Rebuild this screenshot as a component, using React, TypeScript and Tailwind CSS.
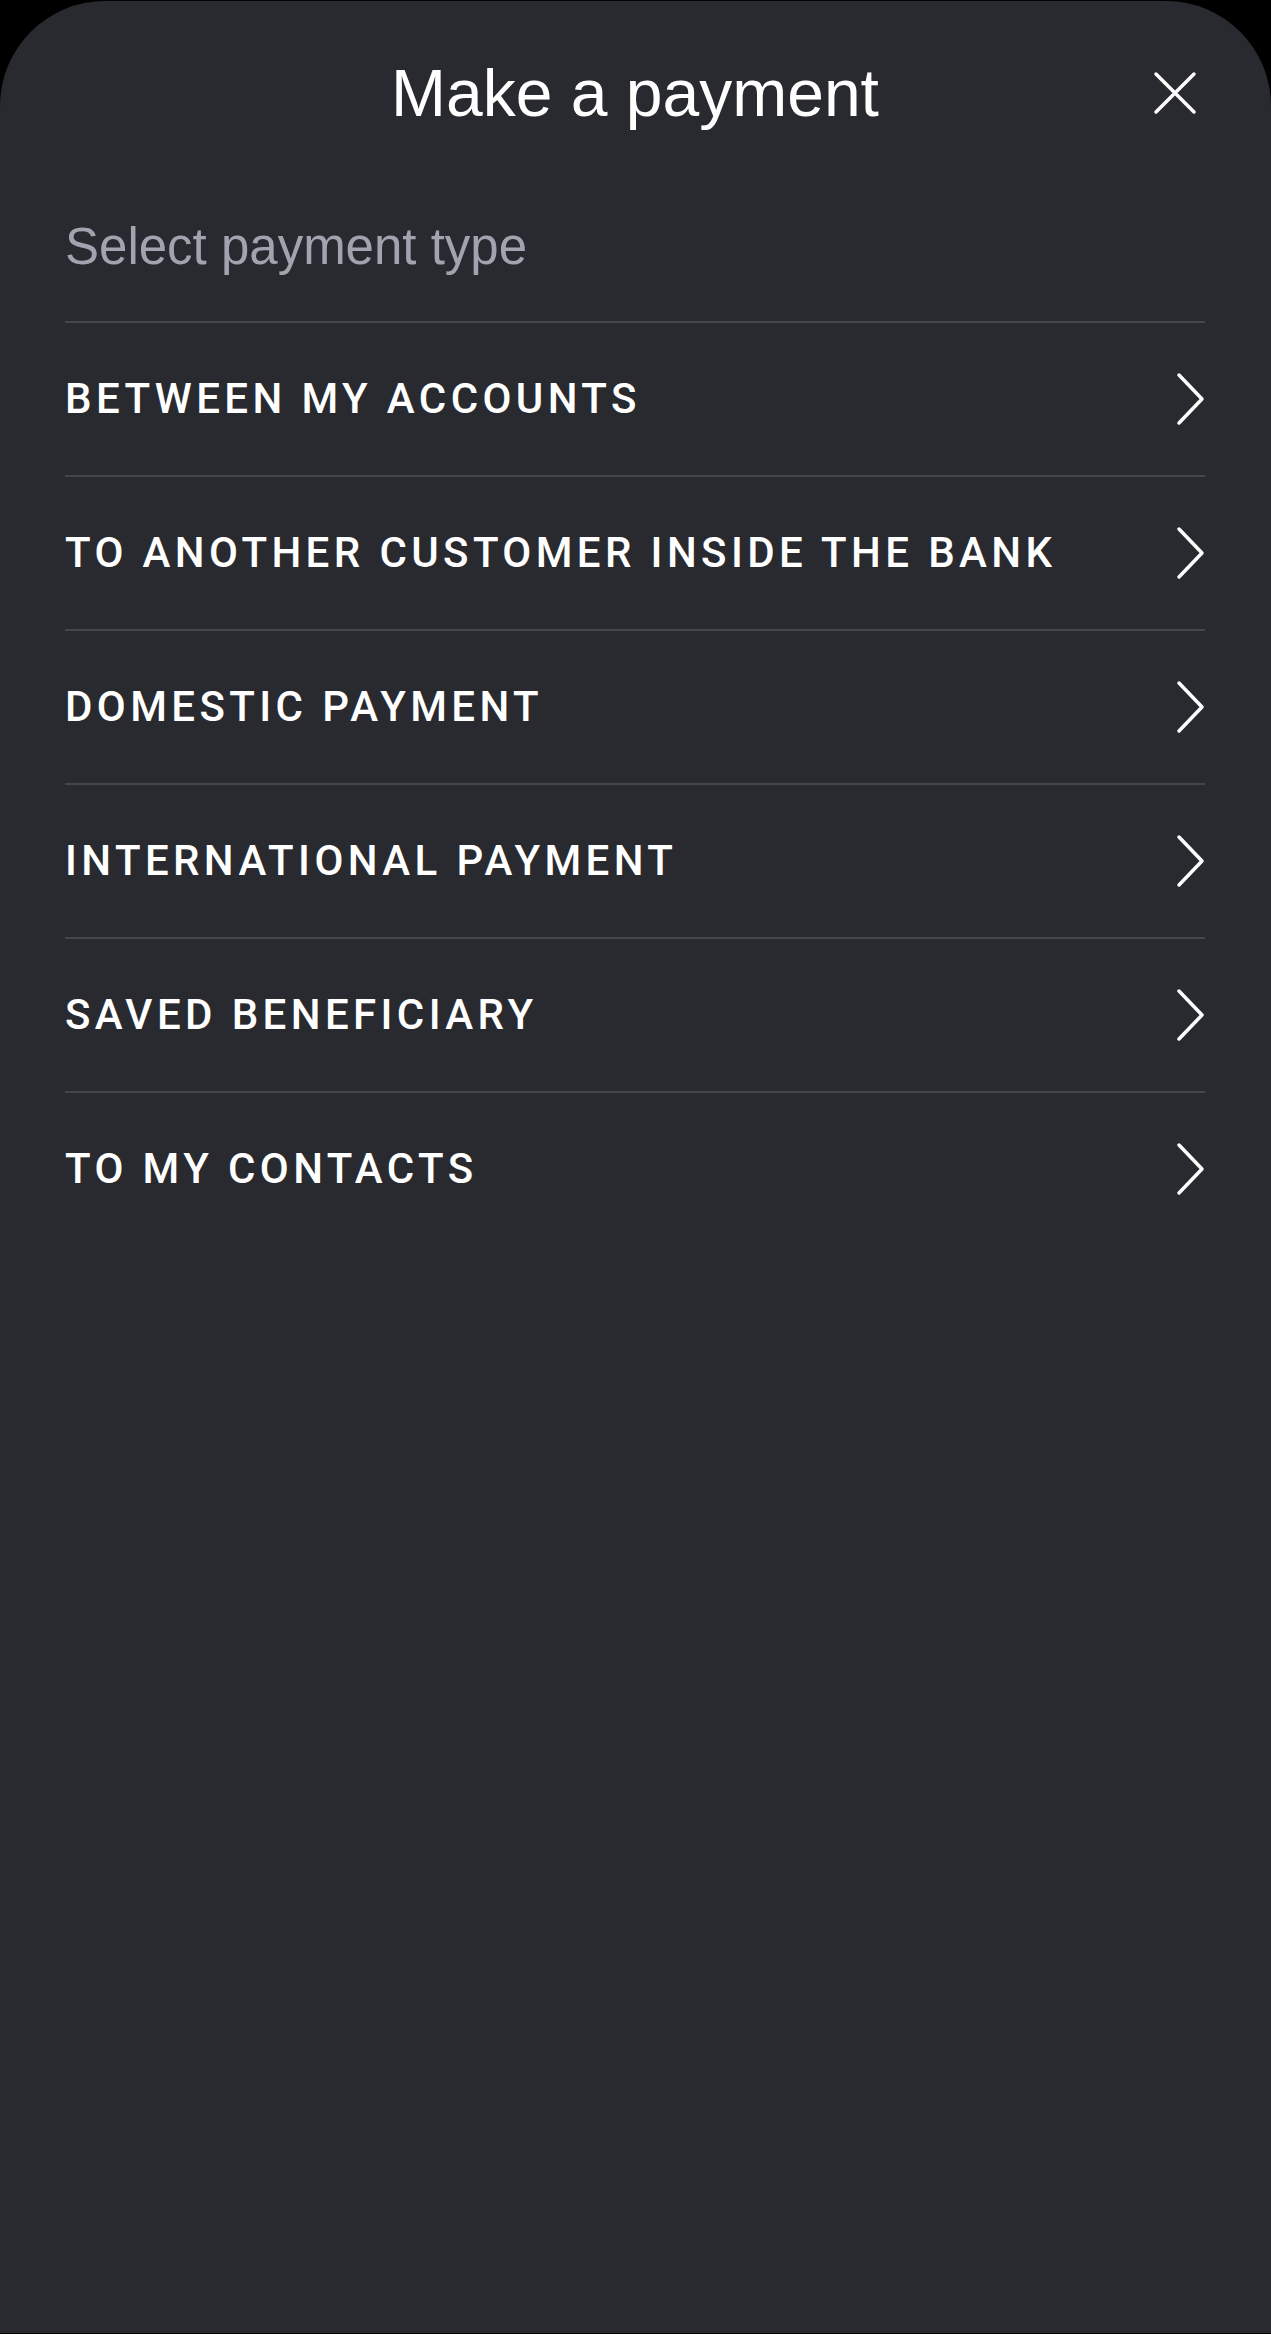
import React from 'react';

const paymentTypes = [
  'Between my accounts',
  'To another customer inside the bank',
  'Domestic payment',
  'International payment',
  'Saved beneficiary',
  'To my contacts',
];

function CloseIcon() {
  return (
    <svg width="44" height="44" viewBox="0 0 44 44" fill="none">
      <path d="M3 3L41 41M41 3L3 41" stroke="white" strokeWidth="3.5" strokeLinecap="round" />
    </svg>
  );
}

function Chevron() {
  return (
    <svg width="30" height="54" viewBox="0 0 30 54" fill="none">
      <path d="M4 3L27 27L4 51" stroke="white" strokeWidth="3.5" strokeLinecap="round" strokeLinejoin="round" />
    </svg>
  );
}

export default function App() {
  return (
    <div className="min-h-screen bg-black pt-px pb-px flex flex-col">
      <div className="flex-1 bg-[#282a2f] rounded-t-[105px] pl-[65px] pr-[66px]">
        {/* Header */}
        <div className="grid grid-cols-[1fr_auto_1fr] items-center pt-[59px] h-[125px]">
          <div />
          <h1 className="font-['Liberation_Sans',Arial,sans-serif] text-[66px] leading-none text-white">
            Make a payment
          </h1>
          <div className="flex justify-end pr-[8px]">
            <button className="flex items-center justify-center">
              <CloseIcon />
            </button>
          </div>
        </div>

        {/* Subtitle */}
        <p className="mt-[95px] mb-[49px] font-['Liberation_Sans',Arial,sans-serif] text-[51px] leading-none text-[#a1a3af]">
          Select payment type
        </p>

        {/* Payment types */}
        <ul>
          {paymentTypes.map(type => (
            <li
              key={type}
              className="flex items-center justify-between h-[154px] border-t-2 border-[#43464c]"
            >
              <span className="font-['Roboto',sans-serif] font-medium text-[42px] leading-none uppercase tracking-[4.4px] text-white">
                {type}
              </span>
              <Chevron />
            </li>
          ))}
        </ul>
      </div>
    </div>
  );
}
